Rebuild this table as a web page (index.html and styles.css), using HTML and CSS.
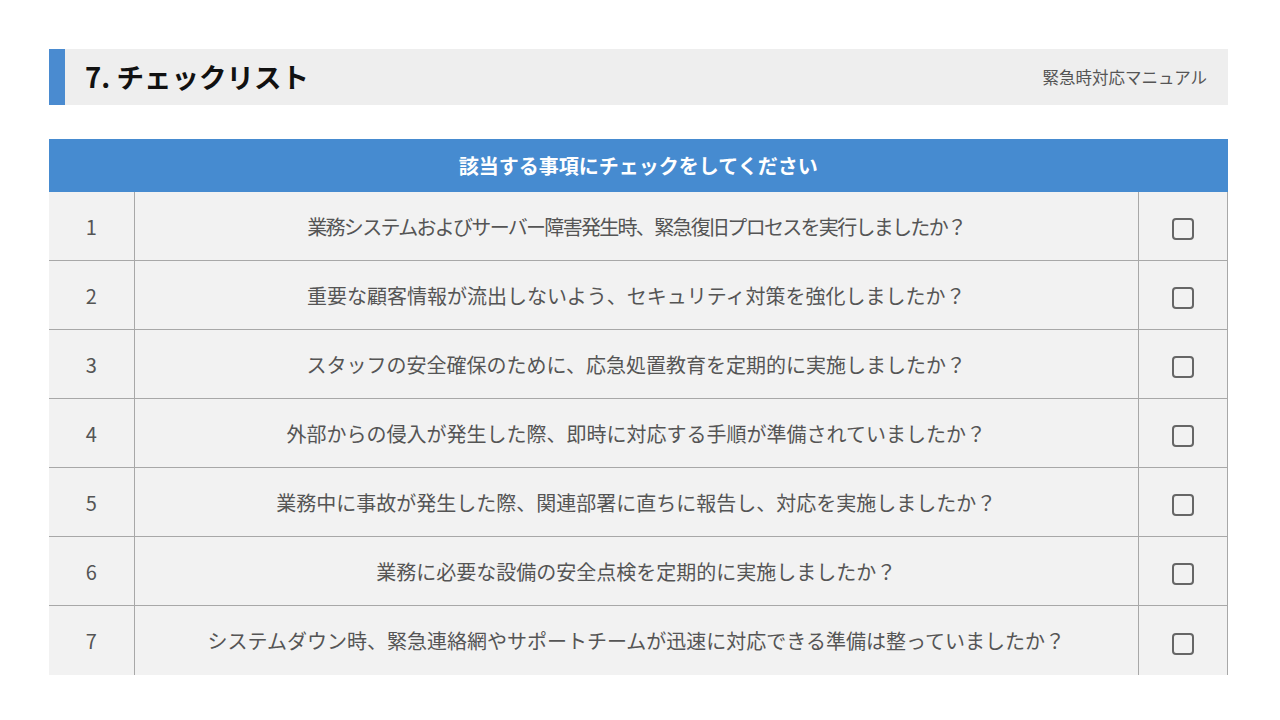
FILE: index.html
```html
<!DOCTYPE html>
<html lang="ja">
<head>
<meta charset="utf-8">
<link rel="stylesheet" href="styles.css">
</head>
<body>
<div class="page">
  <header class="titlebar">
    <div class="accent"></div>
    <h1 class="title">7. チェックリスト</h1>
    <div class="subtitle">緊急時対応マニュアル</div>
  </header>
  <table class="checklist">
    <colgroup>
      <col class="col-num">
      <col>
      <col class="col-chk">
    </colgroup>
    <thead>
      <tr><th colspan="3">該当する事項にチェックをしてください</th></tr>
    </thead>
    <tbody>
      <tr><td class="num">1</td><td class="q q-tight">業務システムおよびサーバー障害発生時、緊急復旧プロセスを実行しましたか？</td><td class="chk"><span class="box"></span></td></tr>
      <tr><td class="num">2</td><td class="q">重要な顧客情報が流出しないよう、セキュリティ対策を強化しましたか？</td><td class="chk"><span class="box"></span></td></tr>
      <tr><td class="num">3</td><td class="q">スタッフの安全確保のために、応急処置教育を定期的に実施しましたか？</td><td class="chk"><span class="box"></span></td></tr>
      <tr><td class="num">4</td><td class="q">外部からの侵入が発生した際、即時に対応する手順が準備されていましたか？</td><td class="chk"><span class="box"></span></td></tr>
      <tr><td class="num">5</td><td class="q">業務中に事故が発生した際、関連部署に直ちに報告し、対応を実施しましたか？</td><td class="chk"><span class="box"></span></td></tr>
      <tr><td class="num">6</td><td class="q">業務に必要な設備の安全点検を定期的に実施しましたか？</td><td class="chk"><span class="box"></span></td></tr>
      <tr><td class="num">7</td><td class="q">システムダウン時、緊急連絡網やサポートチームが迅速に対応できる準備は整っていましたか？</td><td class="chk"><span class="box"></span></td></tr>
    </tbody>
  </table>
</div>
</body>
</html>
```
FILE: styles.css
```css
html, body {
  margin: 0;
  padding: 0;
  background: #ffffff;
  font-family: "Noto Sans CJK JP", "Noto Sans", sans-serif;
}
.page {
  padding: 49px 52px 0 49px;
}
.titlebar {
  display: flex;
  align-items: center;
  height: 56px;
  background: #eeeeee;
}
.accent {
  width: 16px;
  align-self: stretch;
  background: #4a8bd0;
}
.title {
  margin: 0 0 0 20px;
  flex: 1;
  font-size: 27.5px;
  font-weight: 700;
  color: #111;
  line-height: 1;
}
.subtitle {
  margin-right: 21px;
  font-size: 16.5px;
  color: #555;
}
.checklist {
  margin-top: 34px;
  width: 100%;
  border-collapse: collapse;
  table-layout: fixed;
}
.col-num {
  width: 85px;
}
.col-chk {
  width: 89px;
}
.checklist th {
  height: 53px;
  padding: 0;
  background: #468bd0;
  color: #ffffff;
  font-size: 20px;
  font-weight: 700;
  text-align: center;
}
.checklist td {
  height: 68px;
  padding: 0;
  background: #f2f2f2;
  color: #555;
  font-size: 20px;
  text-align: center;
  white-space: nowrap;
  border-bottom: 1px solid #a8a8a8;
  border-right: 1px solid #a8a8a8;
}
.checklist td.num {
  font-size: 20px;
}
.checklist td.q-tight {
  letter-spacing: -1.7px;
}
.checklist tbody tr:last-child td {
  height: 69px;
  border-bottom: none;
}
.box {
  display: inline-block;
  width: 18px;
  height: 18px;
  border: 2px solid #666;
  border-radius: 4px;
  vertical-align: middle;
}
```
